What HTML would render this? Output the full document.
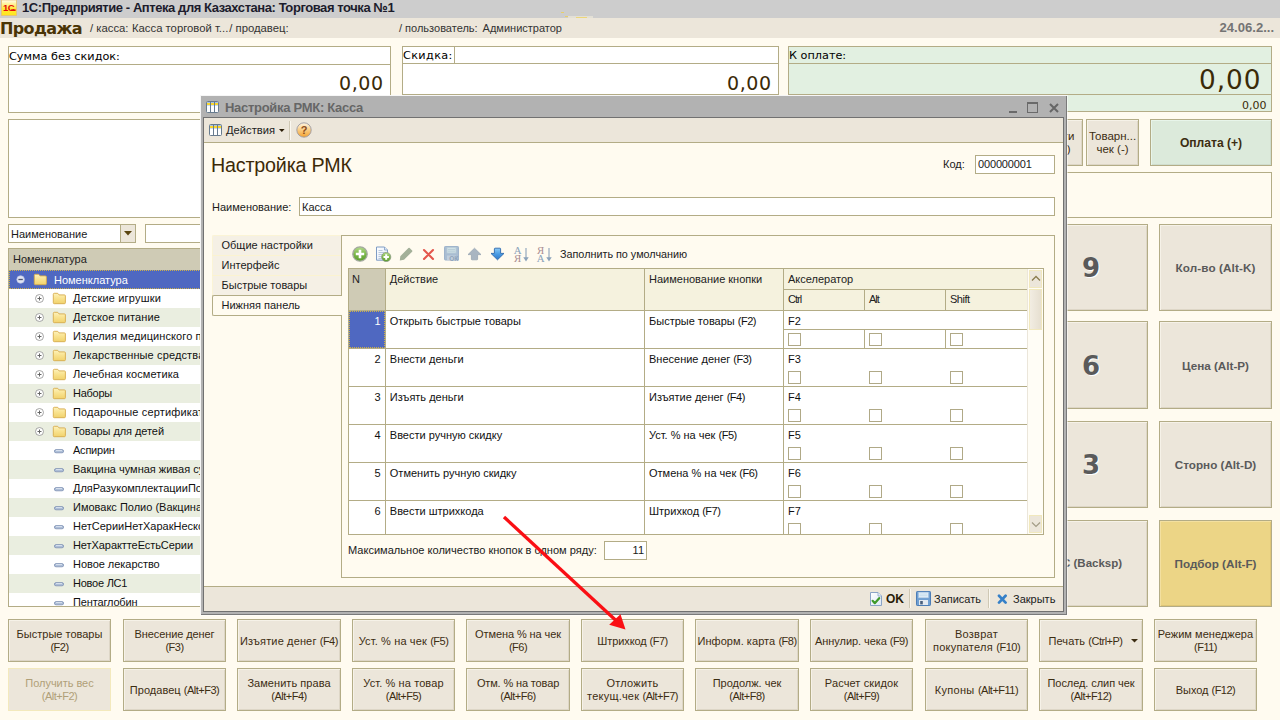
<!DOCTYPE html>
<html lang="ru"><head><meta charset="utf-8"><title>1С:Предприятие</title>
<style>
*{box-sizing:border-box}
html,body{margin:0;padding:0}
body{width:1280px;height:720px;position:relative;overflow:hidden;background:#fffbf0;font-family:"Liberation Sans",sans-serif;font-size:11px;color:#1a1a1a;line-height:13px}
.a{position:absolute;white-space:nowrap}
.v{font-family:"DejaVu Sans","Liberation Sans",sans-serif}
.box{position:absolute;border:1px solid #b3ac86;background:#fff}
.btn{position:absolute;border:1px solid #b3ac86;background:#ece6da;box-shadow:inset 1px 1px 0 #f6f2e8,inset -1px -1px 0 #ddd6c6;display:flex;align-items:center;justify-content:center;text-align:center;color:#3c2d12;font-size:11px;line-height:13px}
.nb{font-weight:bold;color:#5a5a5a}
.l{letter-spacing:-.5px}
.btn .l{letter-spacing:-.5px}
.hl{position:absolute;background:#b3ac86}
</style></head><body>

<!-- app title bar -->
<div class="a" style="left:0;top:0;width:1280px;height:18px;background:#cdcdcd"></div>
<svg class="a" style="left:1px;top:0" width="16" height="16" viewBox="0 0 16 16"><defs><linearGradient id="ig" x1="0" y1="0" x2="0" y2="1"><stop offset="0" stop-color="#fffdf0"/><stop offset=".55" stop-color="#ffe83a"/><stop offset="1" stop-color="#ffe61c"/></linearGradient></defs><rect x=".5" y="0" width="15" height="15.5" fill="url(#ig)" stroke="#e8c070" stroke-width=".8"/><text x="2" y="11" font-family="Liberation Sans,sans-serif" font-weight="bold" font-size="9.5" letter-spacing="-.5" fill="#e60a0a">1С</text><path d="M10 10.2h4.6" stroke="#e60a0a" stroke-width="1.6"/></svg>
<div class="a" id="apptitle" style="left:22px;top:0px;font-weight:bold;font-size:13px;letter-spacing:-.43px;line-height:15px;color:#1c1c2c">1С:Предприятие - Аптека для Казахстана: Торговая точка №1</div>

<div class="a" style="left:568px;top:16px;width:25px;height:2px;background:#e3e0d6"></div><div class="a" style="left:576px;top:17px;width:11px;height:1px;background:#ecd67a"></div><div class="a" style="left:561px;top:12px;width:3px;height:1px;background:#e8cf6a"></div><div class="a" style="left:565px;top:16px;width:3px;height:1px;background:#e8cf6a"></div>
<!-- header bar -->
<div class="a" style="left:0;top:18px;width:1280px;height:20px;background:#ece6da"></div>
<div class="a v" id="prodazha" style="left:0px;top:19px;font-weight:bold;font-size:16px;letter-spacing:-.62px;line-height:20px;color:#4a3405">Продажа</div>
<div class="a" id="kassa" style="left:90px;top:22px;font-size:11.3px;color:#333">/ касса:<span style="margin-left:3.5px">Касса торговой т...</span><span style="margin-left:1px">/ продавец:</span></div>
<div class="a" id="user" style="left:399px;top:22px;font-size:11px;color:#333">/ пользователь:<span style="margin-left:5px">Администратор</span></div>
<div class="a" id="date" style="left:1219.5px;top:20px;font-size:13.1px;line-height:15px;font-weight:bold;color:#747474">24.06.2...</div>

<!-- top boxes -->
<div class="box" style="left:8px;top:46px;width:383px;height:67px"></div>
<div class="hl" style="left:8px;top:64px;width:383px;height:1px"></div>
<div class="a v" id="summa" style="left:9px;top:50px;font-size:11.25px;color:#000">Сумма без скидок:</div>
<div class="a v" id="z1" style="left:339px;top:71px;font-size:19px;letter-spacing:.6px;line-height:24px;color:#3a2a08">0,00</div>

<div class="box" style="left:402px;top:46px;width:377px;height:49px"></div>
<div class="hl" style="left:402px;top:63px;width:377px;height:1px"></div>
<div class="hl" style="left:454px;top:46px;width:1px;height:18px"></div>
<div class="a v" id="skidka" style="left:403px;top:49px;font-size:11.25px;letter-spacing:.35px;color:#000">Скидка:</div>
<div class="a v" id="z2" style="left:727px;top:71px;font-size:19px;letter-spacing:.6px;line-height:24px;color:#3a2a08">0,00</div>

<div class="box" style="left:788px;top:46px;width:484px;height:66px;background:#e2f0e1"></div>
<div class="hl" style="left:788px;top:63px;width:484px;height:1px"></div>
<div class="hl" style="left:788px;top:94px;width:484px;height:1px"></div>
<div class="a v" id="koplate" style="left:789px;top:49px;font-size:11.25px;color:#000">К оплате:</div>
<div class="a v" id="z3" style="left:1199px;top:63px;font-size:26.3px;letter-spacing:1px;line-height:34px;color:#3a2a08">0,00</div>
<div class="a v" id="z4" style="left:1242px;top:99px;font-size:11px;color:#3a2a08">0,00</div>

<!-- second row -->
<div class="box" style="left:8px;top:119px;width:1000px;height:99px"></div>
<div class="btn" style="left:1030px;top:119px;width:53px;height:47px;font-size:11.5px"><div><span style="position:relative;left:-1px">Внести</span><br><span style="position:relative;left:2.5px">(Ins)</span></div></div>
<div class="btn" style="left:1086px;top:119px;width:53px;height:47px;font-size:11.5px"><div>Товарн...<br>чек (-)</div></div>
<div class="btn" style="left:1150px;top:119px;width:122px;height:47px;background:#dceadb;box-shadow:inset 1px 1px 0 #e8f5ea,inset -1px -1px 0 #cfddce;font-weight:bold;font-size:12.1px;padding-top:2px">Оплата (+)</div>
<div class="box" style="left:1020px;top:172px;width:252px;height:46px;background:#fffbf0"></div>

<!-- combobox -->
<div class="box" style="left:8px;top:224px;width:128px;height:19px"></div>
<div class="a" style="left:120px;top:225px;width:15px;height:17px;background:#ece6da;border-left:1px solid #b3ac86"></div>
<svg class="a" style="left:124px;top:231px" width="8" height="5"><path d="M0 0h8l-4 4.5z" fill="#5a4510"/></svg>
<div class="a" id="naim1" style="left:11px;top:228px">Наименование</div>
<div class="box" style="left:145px;top:224px;width:200px;height:19px"></div>

<!-- tree -->
<div class="box" id="tree" style="left:8px;top:248px;width:400px;height:359px;overflow:hidden">
<svg class="a" width="0" height="0"><defs><linearGradient id="fg" x1="0" y1="0" x2="0" y2="1"><stop offset="0" stop-color="#fdf2bc"/><stop offset=".45" stop-color="#f9e391"/><stop offset="1" stop-color="#f1d26c"/></linearGradient></defs></svg>
<div class="a" style="left:0;top:0;width:400px;height:21px;background:#cfcbb5"></div>
<div class="a" style="left:4px;top:4px;color:#222">Номенклатура</div>
<div class="a" style="left:0;top:21px;width:400px;height:19px;background:#4f68c1;outline:1px dotted #cdb04a;outline-offset:-1px"></div>
<svg class="a" style="left:7px;top:25.69999999999999px" width="9" height="9" viewBox="0 0 9 9"><circle cx="4.6" cy="4.5" r="3.8" fill="#e0e4f3" stroke="#b9c1e2" stroke-width=".7"/><path d="M2.4 4.5h4.4" stroke="#4a5270" stroke-width="1.3"/></svg>
<svg class="a" style="left:23.700000000000003px;top:23.69999999999999px" width="15" height="13" viewBox="0 0 15 13"><path d="M1.3 2.3a1 1 0 0 1 1-1h3.4l1.3 1.6h5.4a1 1 0 0 1 1 1v6.8a1 1 0 0 1-1 1h-10.1a1 1 0 0 1-1-1z" fill="url(#fg)" stroke="#d7ab4c" stroke-width=".9"/></svg>
<div class="a" style="left:45px;top:25px;color:#fff">Номенклатура</div>
<svg class="a" style="left:26px;top:45px" width="9" height="9" viewBox="0 0 9 9"><circle cx="4.5" cy="4.5" r="4" fill="#fff" stroke="#9a9a9a" stroke-width=".9"/><path d="M2.5 4.5h4M4.5 2.5v4" stroke="#666" stroke-width="1"/></svg>
<svg class="a" style="left:42.7px;top:42.69999999999999px" width="15" height="13" viewBox="0 0 15 13"><path d="M1.3 2.3a1 1 0 0 1 1-1h3.4l1.3 1.6h5.4a1 1 0 0 1 1 1v6.8a1 1 0 0 1-1 1h-10.1a1 1 0 0 1-1-1z" fill="url(#fg)" stroke="#d7ab4c" stroke-width=".9"/></svg>
<div class="a" style="left:64px;top:43px;color:#111;letter-spacing:0.19px">Детские игрушки</div>
<div class="a" style="left:0;top:59px;width:400px;height:19px;background:#eaeee0"></div>
<svg class="a" style="left:26px;top:64px" width="9" height="9" viewBox="0 0 9 9"><circle cx="4.5" cy="4.5" r="4" fill="#fff" stroke="#9a9a9a" stroke-width=".9"/><path d="M2.5 4.5h4M4.5 2.5v4" stroke="#666" stroke-width="1"/></svg>
<svg class="a" style="left:42.7px;top:61.69999999999999px" width="15" height="13" viewBox="0 0 15 13"><path d="M1.3 2.3a1 1 0 0 1 1-1h3.4l1.3 1.6h5.4a1 1 0 0 1 1 1v6.8a1 1 0 0 1-1 1h-10.1a1 1 0 0 1-1-1z" fill="url(#fg)" stroke="#d7ab4c" stroke-width=".9"/></svg>
<div class="a" style="left:64px;top:62px;color:#111;letter-spacing:0.11px">Детское питание</div>
<svg class="a" style="left:26px;top:83px" width="9" height="9" viewBox="0 0 9 9"><circle cx="4.5" cy="4.5" r="4" fill="#fff" stroke="#9a9a9a" stroke-width=".9"/><path d="M2.5 4.5h4M4.5 2.5v4" stroke="#666" stroke-width="1"/></svg>
<svg class="a" style="left:42.7px;top:80.69999999999999px" width="15" height="13" viewBox="0 0 15 13"><path d="M1.3 2.3a1 1 0 0 1 1-1h3.4l1.3 1.6h5.4a1 1 0 0 1 1 1v6.8a1 1 0 0 1-1 1h-10.1a1 1 0 0 1-1-1z" fill="url(#fg)" stroke="#d7ab4c" stroke-width=".9"/></svg>
<div class="a" style="left:64px;top:81px;color:#111;letter-spacing:0.10px">Изделия медицинского применения</div>
<div class="a" style="left:0;top:97px;width:400px;height:19px;background:#eaeee0"></div>
<svg class="a" style="left:26px;top:102px" width="9" height="9" viewBox="0 0 9 9"><circle cx="4.5" cy="4.5" r="4" fill="#fff" stroke="#9a9a9a" stroke-width=".9"/><path d="M2.5 4.5h4M4.5 2.5v4" stroke="#666" stroke-width="1"/></svg>
<svg class="a" style="left:42.7px;top:99.69999999999999px" width="15" height="13" viewBox="0 0 15 13"><path d="M1.3 2.3a1 1 0 0 1 1-1h3.4l1.3 1.6h5.4a1 1 0 0 1 1 1v6.8a1 1 0 0 1-1 1h-10.1a1 1 0 0 1-1-1z" fill="url(#fg)" stroke="#d7ab4c" stroke-width=".9"/></svg>
<div class="a" style="left:64px;top:100px;color:#111;letter-spacing:0.13px">Лекарственные средства</div>
<svg class="a" style="left:26px;top:121px" width="9" height="9" viewBox="0 0 9 9"><circle cx="4.5" cy="4.5" r="4" fill="#fff" stroke="#9a9a9a" stroke-width=".9"/><path d="M2.5 4.5h4M4.5 2.5v4" stroke="#666" stroke-width="1"/></svg>
<svg class="a" style="left:42.7px;top:118.69999999999999px" width="15" height="13" viewBox="0 0 15 13"><path d="M1.3 2.3a1 1 0 0 1 1-1h3.4l1.3 1.6h5.4a1 1 0 0 1 1 1v6.8a1 1 0 0 1-1 1h-10.1a1 1 0 0 1-1-1z" fill="url(#fg)" stroke="#d7ab4c" stroke-width=".9"/></svg>
<div class="a" style="left:64px;top:119px;color:#111;letter-spacing:0.09px">Лечебная косметика</div>
<div class="a" style="left:0;top:135px;width:400px;height:19px;background:#eaeee0"></div>
<svg class="a" style="left:26px;top:140px" width="9" height="9" viewBox="0 0 9 9"><circle cx="4.5" cy="4.5" r="4" fill="#fff" stroke="#9a9a9a" stroke-width=".9"/><path d="M2.5 4.5h4M4.5 2.5v4" stroke="#666" stroke-width="1"/></svg>
<svg class="a" style="left:42.7px;top:137.7px" width="15" height="13" viewBox="0 0 15 13"><path d="M1.3 2.3a1 1 0 0 1 1-1h3.4l1.3 1.6h5.4a1 1 0 0 1 1 1v6.8a1 1 0 0 1-1 1h-10.1a1 1 0 0 1-1-1z" fill="url(#fg)" stroke="#d7ab4c" stroke-width=".9"/></svg>
<div class="a" style="left:64px;top:138px;color:#111;letter-spacing:-0.25px">Наборы</div>
<svg class="a" style="left:26px;top:159px" width="9" height="9" viewBox="0 0 9 9"><circle cx="4.5" cy="4.5" r="4" fill="#fff" stroke="#9a9a9a" stroke-width=".9"/><path d="M2.5 4.5h4M4.5 2.5v4" stroke="#666" stroke-width="1"/></svg>
<svg class="a" style="left:42.7px;top:156.7px" width="15" height="13" viewBox="0 0 15 13"><path d="M1.3 2.3a1 1 0 0 1 1-1h3.4l1.3 1.6h5.4a1 1 0 0 1 1 1v6.8a1 1 0 0 1-1 1h-10.1a1 1 0 0 1-1-1z" fill="url(#fg)" stroke="#d7ab4c" stroke-width=".9"/></svg>
<div class="a" style="left:64px;top:157px;color:#111;letter-spacing:0.15px">Подарочные сертификаты</div>
<div class="a" style="left:0;top:173px;width:400px;height:19px;background:#eaeee0"></div>
<svg class="a" style="left:26px;top:178px" width="9" height="9" viewBox="0 0 9 9"><circle cx="4.5" cy="4.5" r="4" fill="#fff" stroke="#9a9a9a" stroke-width=".9"/><path d="M2.5 4.5h4M4.5 2.5v4" stroke="#666" stroke-width="1"/></svg>
<svg class="a" style="left:42.7px;top:175.7px" width="15" height="13" viewBox="0 0 15 13"><path d="M1.3 2.3a1 1 0 0 1 1-1h3.4l1.3 1.6h5.4a1 1 0 0 1 1 1v6.8a1 1 0 0 1-1 1h-10.1a1 1 0 0 1-1-1z" fill="url(#fg)" stroke="#d7ab4c" stroke-width=".9"/></svg>
<div class="a" style="left:64px;top:176px;color:#111;letter-spacing:-0.07px">Товары для детей</div>
<svg class="a" style="left:45px;top:200px" width="10" height="5" viewBox="0 0 10 5"><rect x=".4" y=".6" width="9.2" height="3.2" rx="1.6" fill="#aebfd8" stroke="#7d91b2" stroke-width=".8"/><path d="M2 1.5h6" stroke="#dfe7f3" stroke-width=".8"/></svg>
<div class="a" style="left:64px;top:195px;color:#111;letter-spacing:-0.23px">Аспирин</div>
<div class="a" style="left:0;top:211px;width:400px;height:19px;background:#eaeee0"></div>
<svg class="a" style="left:45px;top:219px" width="10" height="5" viewBox="0 0 10 5"><rect x=".4" y=".6" width="9.2" height="3.2" rx="1.6" fill="#aebfd8" stroke="#7d91b2" stroke-width=".8"/><path d="M2 1.5h6" stroke="#dfe7f3" stroke-width=".8"/></svg>
<div class="a" style="left:64px;top:214px;color:#111;letter-spacing:0.00px">Вакцина чумная живая сухая</div>
<svg class="a" style="left:45px;top:238px" width="10" height="5" viewBox="0 0 10 5"><rect x=".4" y=".6" width="9.2" height="3.2" rx="1.6" fill="#aebfd8" stroke="#7d91b2" stroke-width=".8"/><path d="M2 1.5h6" stroke="#dfe7f3" stroke-width=".8"/></svg>
<div class="a" style="left:64px;top:233px;color:#111;letter-spacing:0.00px">ДляРазукомплектацииПоСериям</div>
<div class="a" style="left:0;top:249px;width:400px;height:19px;background:#eaeee0"></div>
<svg class="a" style="left:45px;top:257px" width="10" height="5" viewBox="0 0 10 5"><rect x=".4" y=".6" width="9.2" height="3.2" rx="1.6" fill="#aebfd8" stroke="#7d91b2" stroke-width=".8"/><path d="M2 1.5h6" stroke="#dfe7f3" stroke-width=".8"/></svg>
<div class="a" style="left:64px;top:252px;color:#111;letter-spacing:0.00px">Имовакс Полио (Вакцина)</div>
<svg class="a" style="left:45px;top:276px" width="10" height="5" viewBox="0 0 10 5"><rect x=".4" y=".6" width="9.2" height="3.2" rx="1.6" fill="#aebfd8" stroke="#7d91b2" stroke-width=".8"/><path d="M2 1.5h6" stroke="#dfe7f3" stroke-width=".8"/></svg>
<div class="a" style="left:64px;top:271px;color:#111;letter-spacing:0.00px">НетСерииНетХаракНесколько</div>
<div class="a" style="left:0;top:287px;width:400px;height:19px;background:#eaeee0"></div>
<svg class="a" style="left:45px;top:295px" width="10" height="5" viewBox="0 0 10 5"><rect x=".4" y=".6" width="9.2" height="3.2" rx="1.6" fill="#aebfd8" stroke="#7d91b2" stroke-width=".8"/><path d="M2 1.5h6" stroke="#dfe7f3" stroke-width=".8"/></svg>
<div class="a" style="left:64px;top:290px;color:#111;letter-spacing:-0.07px">НетХаракттеЕстьСерии</div>
<svg class="a" style="left:45px;top:314px" width="10" height="5" viewBox="0 0 10 5"><rect x=".4" y=".6" width="9.2" height="3.2" rx="1.6" fill="#aebfd8" stroke="#7d91b2" stroke-width=".8"/><path d="M2 1.5h6" stroke="#dfe7f3" stroke-width=".8"/></svg>
<div class="a" style="left:64px;top:309px;color:#111;letter-spacing:-0.04px">Новое лекарство</div>
<div class="a" style="left:0;top:325px;width:400px;height:19px;background:#eaeee0"></div>
<svg class="a" style="left:45px;top:333px" width="10" height="5" viewBox="0 0 10 5"><rect x=".4" y=".6" width="9.2" height="3.2" rx="1.6" fill="#aebfd8" stroke="#7d91b2" stroke-width=".8"/><path d="M2 1.5h6" stroke="#dfe7f3" stroke-width=".8"/></svg>
<div class="a" style="left:64px;top:328px;color:#111;letter-spacing:-0.24px">Новое ЛС1</div>
<svg class="a" style="left:45px;top:352px" width="10" height="5" viewBox="0 0 10 5"><rect x=".4" y=".6" width="9.2" height="3.2" rx="1.6" fill="#aebfd8" stroke="#7d91b2" stroke-width=".8"/><path d="M2 1.5h6" stroke="#dfe7f3" stroke-width=".8"/></svg>
<div class="a" style="left:64px;top:347px;color:#111;letter-spacing:-0.15px">Пентаглобин</div>
</div>

<!-- right keypad -->
<div class="btn nb" style="left:1040px;top:224px;width:108px;height:87px;font-family:'DejaVu Sans',sans-serif;font-size:26px;text-shadow:1px 1px 0 #fff;justify-content:flex-start;padding-left:41px;padding-top:2px" >9</div>
<div class="btn nb" style="left:1159px;top:224px;width:113px;height:87px;font-size:11.7px;letter-spacing:.12px">Кол-во (Alt-K)</div>
<div class="btn nb" style="left:1040px;top:321px;width:108px;height:88px;font-family:'DejaVu Sans',sans-serif;font-size:26px;text-shadow:1px 1px 0 #fff;justify-content:flex-start;padding-left:41px;padding-top:2px">6</div>
<div class="btn nb" style="left:1159px;top:321px;width:113px;height:88px;font-size:11.7px">Цена (Alt-P)</div>
<div class="btn nb" style="left:1040px;top:421px;width:108px;height:87px;font-family:'DejaVu Sans',sans-serif;font-size:26px;text-shadow:1px 1px 0 #fff;justify-content:flex-start;padding-left:41px;padding-top:2px">3</div>
<div class="btn nb" style="left:1159px;top:421px;width:113px;height:87px;font-size:11.7px">Сторно (Alt-D)</div>
<div class="btn nb" style="left:1040px;top:520px;width:108px;height:87px;font-size:11.5px;justify-content:flex-start;padding-left:21px">С (Backsp)</div>
<div class="btn nb" style="left:1159px;top:520px;width:113px;height:87px;font-size:11.7px;background:#ecd586;box-shadow:inset 1px 1px 0 #f3e0a0,inset -1px -1px 0 #dfc676">Подбор (Alt-F)</div>

<!-- bottom buttons -->
<div id="bb">
<div class="btn" style="left:8px;top:619px;width:103px;height:43px"><div style="letter-spacing:0.00px">Быстрые товары<br><span class="l">(F2)</span></div></div>
<div class="btn" style="left:123px;top:619px;width:103px;height:43px"><div style="letter-spacing:-0.09px">Внесение денег<br><span class="l">(F3)</span></div></div>
<div class="btn" style="left:237px;top:619px;width:104px;height:43px;padding-top:2px"><div style="letter-spacing:0.14px">Изъятие денег <span class="l">(F4)</span></div></div>
<div class="btn" style="left:352px;top:619px;width:103px;height:43px;padding-top:2px"><div style="letter-spacing:0.14px">Уст. % на чек <span class="l">(F5)</span></div></div>
<div class="btn" style="left:466px;top:619px;width:104px;height:43px"><div style="letter-spacing:-0.10px">Отмена % на чек<br><span class="l">(F6)</span></div></div>
<div class="btn" style="left:581px;top:619px;width:103px;height:43px;padding-top:2px"><div style="letter-spacing:-0.09px">Штрихкод <span class="l">(F7)</span></div></div>
<div class="btn" style="left:695px;top:619px;width:104px;height:43px;padding-top:2px"><div style="letter-spacing:0.06px">Информ. карта <span class="l">(F8)</span></div></div>
<div class="btn" style="left:810px;top:619px;width:103px;height:43px;padding-top:2px"><div style="letter-spacing:-0.07px">Аннулир. чека <span class="l">(F9)</span></div></div>
<div class="btn" style="left:925px;top:619px;width:103px;height:43px"><div style="letter-spacing:0.26px">Возврат<br>покупателя <span class="l">(F10)</span></div></div>
<div class="btn" style="left:1039px;top:619px;width:104px;height:43px;padding-top:2px"><div style="letter-spacing:0.11px"><span style="margin-right:11px">Печать <span class="l">(Ctrl+P)</span></span><svg class="a" style="right:4px;top:19px" width="7" height="4"><path d="M0 0h7l-3.5 3.5z" fill="#3c2d12"/></svg></div></div>
<div class="btn" style="left:1154px;top:619px;width:103px;height:43px"><div style="letter-spacing:0.04px">Режим менеджера<br><span class="l">(F11)</span></div></div>
<div class="btn" style="left:8px;top:668px;width:103px;height:43px;color:#b0a078;border-color:#f3e9bd;box-shadow:none"><div style="letter-spacing:-0.04px">Получить вес<br><span class="l">(Alt+F2)</span></div></div>
<div class="btn" style="left:123px;top:668px;width:103px;height:43px;padding-top:2px"><div style="letter-spacing:0.03px">Продавец <span class="l">(Alt+F3)</span></div></div>
<div class="btn" style="left:237px;top:668px;width:104px;height:43px"><div style="letter-spacing:0.05px">Заменить права<br><span class="l">(Alt+F4)</span></div></div>
<div class="btn" style="left:352px;top:668px;width:103px;height:43px"><div style="letter-spacing:0.10px">Уст. % на товар<br><span class="l">(Alt+F5)</span></div></div>
<div class="btn" style="left:466px;top:668px;width:104px;height:43px"><div style="letter-spacing:-0.14px">Отм. % на товар<br><span class="l">(Alt+F6)</span></div></div>
<div class="btn" style="left:581px;top:668px;width:103px;height:43px"><div style="letter-spacing:0.21px">Отложить<br>текущ.чек <span class="l">(Alt+F7)</span></div></div>
<div class="btn" style="left:695px;top:668px;width:104px;height:43px"><div style="letter-spacing:0.00px">Продолж. чек<br><span class="l">(Alt+F8)</span></div></div>
<div class="btn" style="left:810px;top:668px;width:103px;height:43px"><div style="letter-spacing:0.11px">Расчет скидок<br><span class="l">(Alt+F9)</span></div></div>
<div class="btn" style="left:925px;top:668px;width:103px;height:43px;padding-top:2px"><div style="letter-spacing:0.29px">Купоны <span class="l">(Alt+F11)</span></div></div>
<div class="btn" style="left:1039px;top:668px;width:104px;height:43px"><div style="letter-spacing:-0.07px">Послед. слип чек<br><span class="l">(Alt+F12)</span></div></div>
<div class="btn" style="left:1154px;top:668px;width:103px;height:43px;padding-top:2px"><div style="letter-spacing:-0.04px">Выход <span class="l">(F12)</span></div></div>
</div>

<!-- dialog -->
<div class="a" id="dlg" style="left:201px;top:96px;width:866px;height:519px;background:#b2b2b2;box-shadow:0 0 0 1px rgba(255,255,255,.5),-1px -1px 0 #ececec;border-right:1px solid #7a7a7a;border-bottom:1px solid #7a7a7a"></div>
<div class="a" style="left:203px;top:117px;width:861px;height:495px;background:#717171"></div>
<div class="a" style="left:204px;top:118px;width:859px;height:493px;background:#fffbf0"></div>
<!-- title -->
<svg class="a" style="left:206px;top:101px" width="13" height="12" viewBox="0 0 13 12"><rect x=".5" y=".5" width="12" height="11" rx="1" fill="#fdfeff" stroke="#677b8e"/><rect x="1" y="1" width="11" height="1" fill="#a9c4e0"/><rect x="1" y="2" width="11" height="2" fill="#fbd62a"/><rect x="1" y="4" width="11" height="1" fill="#c9dcf0"/><path d="M4.5 1v10M8.5 1v10" stroke="#677b8e"/></svg>
<div class="a" id="dtitle" style="left:225px;top:100px;font-weight:bold;font-size:13px;letter-spacing:-.29px;line-height:15px;color:#666">Настройка РМК: Касса</div>
<div class="a" style="left:1009px;top:111px;width:8px;height:2px;background:#6a6a6a"></div>
<div class="a" style="left:1027px;top:102px;width:11px;height:11px;border:1px solid #6a6a6a;border-top-width:2px"></div>
<svg class="a" style="left:1049px;top:103px" width="10" height="10" viewBox="0 0 10 10"><path d="M1 1l8 8M9 1l-8 8" stroke="#666" stroke-width="2"/></svg>
<!-- toolbar -->
<div class="a" style="left:204px;top:118px;width:859px;height:25px;background:#ece6da;border-bottom:1px solid #b3ac86"></div>
<svg class="a" style="left:209px;top:124px" width="13" height="12" viewBox="0 0 13 12"><rect x=".5" y=".5" width="12" height="11" rx="1" fill="#fdfeff" stroke="#677b8e"/><rect x="1" y="1" width="11" height="1" fill="#a9c4e0"/><rect x="1" y="2" width="11" height="2" fill="#fbd62a"/><rect x="1" y="4" width="11" height="1" fill="#c9dcf0"/><path d="M4.5 1v10M8.5 1v10" stroke="#677b8e"/></svg>
<div class="a" id="deist" style="left:226px;top:124px;font-size:11.2px;color:#222">Действия</div>
<svg class="a" style="left:278.6px;top:129px" width="6" height="4"><path d="M0 0h5.6l-2.8 3z" fill="#2a1c06"/></svg>
<div class="a" style="left:289px;top:121px;width:1px;height:19px;background:#cfc8b4"></div>
<div class="a" style="left:290px;top:121px;width:1px;height:19px;background:#fbf8f0"></div>
<svg class="a" style="left:296px;top:122px" width="16" height="16" viewBox="0 0 16 16"><defs><linearGradient id="hg" x1="0" y1="0" x2="0" y2="1"><stop offset="0" stop-color="#fff6e4"/><stop offset=".45" stop-color="#fbd08a"/><stop offset="1" stop-color="#f3a230"/></linearGradient></defs><circle cx="8" cy="8" r="7.2" fill="url(#hg)" stroke="#9c9aa2" stroke-width=".9"/><text x="8" y="12" text-anchor="middle" font-family="Liberation Sans,sans-serif" font-weight="bold" font-size="11" fill="#8a4c1c">?</text></svg>
<!-- heading -->
<div class="a" id="bighead" style="left:211px;top:153px;font-size:19.7px;letter-spacing:-.18px;line-height:24px;color:#3c2a08">Настройка РМК</div>
<div class="a" id="kod" style="left:943px;top:158px">Код:</div>
<div class="box" style="left:975px;top:155px;width:80px;height:19px"></div>
<div class="a" id="kodv" style="left:978px;top:158px;letter-spacing:-.15px">000000001</div>
<div class="a" id="naim2" style="left:212px;top:201px">Наименование:</div>
<div class="box" style="left:299px;top:197px;width:756px;height:19px"></div>
<div class="a" style="left:302px;top:201px">Касса</div>
<!-- tabs -->
<div class="a" style="left:212px;top:235px;width:130px;height:61px;background:#f5f0e5;border-left:1px solid #fbf4d6;border-top:1px solid #fbf4d6;border-radius:2px 0 0 0"></div>
<div class="a" style="left:212px;top:255px;width:130px;height:1px;background:#fbf3d0"></div>
<div class="a" style="left:212px;top:275px;width:130px;height:1px;background:#fbf3d0"></div>
<div class="a" style="left:341px;top:235px;width:714px;height:343px;border:1px solid #b3ac86;background:#fffbf0"></div>
<div class="a" style="left:212px;top:295px;width:130px;height:21px;border:1px solid #b3ac86;border-right:none;background:#fffbf0;border-radius:2px 0 0 2px"></div>
<div class="a" id="tab1" style="left:221.5px;top:239px">Общие настройки</div>
<div class="a" style="left:221.5px;top:259px">Интерфейс</div>
<div class="a" style="left:221.5px;top:279px">Быстрые товары</div>
<div class="a" style="left:221.5px;top:299px">Нижняя панель</div>
<!--ICONS-->
<svg class="a" style="left:0;top:0" width="0" height="0"><defs>
<linearGradient id="gg" x1="0" y1="0" x2="0" y2="1"><stop offset="0" stop-color="#b4dc8c"/><stop offset=".5" stop-color="#7cb848"/><stop offset="1" stop-color="#5c9c30"/></linearGradient>
<linearGradient id="bg1" x1="0" y1="0" x2="0" y2="1"><stop offset="0" stop-color="#8ccbf8"/><stop offset=".5" stop-color="#4a9ce4"/><stop offset="1" stop-color="#2f78c8"/></linearGradient>
<linearGradient id="dg" x1="0" y1="0" x2="1" y2="1"><stop offset="0" stop-color="#ffffff"/><stop offset="1" stop-color="#dde8f6"/></linearGradient>
</defs></svg>
<svg class="a" style="left:352px;top:246px" width="16" height="16" viewBox="0 0 16 16"><circle cx="8" cy="8" r="7.2" fill="url(#gg)" stroke="#a4a8a0" stroke-width="1.3"/><path d="M8 3.8v8.4M3.8 8h8.4" stroke="#fff" stroke-width="2.6"/></svg>
<svg class="a" style="left:376px;top:246px" width="16" height="16" viewBox="0 0 16 16"><path d="M.5 1h8l3 3v10.2h-11z" fill="url(#dg)" stroke="#7f9cc4" stroke-width="1"/><path d="M8.5 1v3h3" fill="#dfe9f7" stroke="#7f9cc4" stroke-width=".8"/><path d="M2.5 4.5h4M2.5 6.5h6M2.5 8.5h4M2.5 10.5h3M2.5 12.5h3" stroke="#b3c3da" stroke-width=".9"/><circle cx="10.2" cy="11" r="4.6" fill="url(#gg)" stroke="#8c9a84" stroke-width=".8"/><path d="M10.2 8.3v5.4M7.5 11h5.4" stroke="#fff" stroke-width="2"/></svg>
<svg class="a" style="left:398px;top:246px" width="16" height="16" viewBox="0 0 16 16"><path d="M1.8 14.4l.5-4.2L10.4 2a.9.9 0 0 1 1.3 0l2.4 2.4a.9.9 0 0 1 0 1.3L6 13.8z" fill="#a3b099"/></svg>
<svg class="a" style="left:422px;top:248px" width="13" height="13" viewBox="0 0 13 13"><path d="M2 2l9 9M11 2l-9 9" stroke="#e4564c" stroke-width="2.1" stroke-linecap="round"/></svg>
<svg class="a" style="left:444px;top:246px" width="16" height="16" viewBox="0 0 16 16"><path d="M.5 1.2a.7.7 0 0 1 .7-.7h12.6a.7.7 0 0 1 .7.7v12.8H1.2a.7.7 0 0 1-.7-.7z" fill="#a9bdd2" stroke="#9fb4cb"/><rect x="3" y="1.5" width="9" height="5.5" fill="#cfe0e6" stroke="#b8ccd8" stroke-width=".8"/><path d="M4 3.5h7M4 5.2h7" stroke="#b4c9d4" stroke-width=".8"/><rect x="3" y="9.5" width="9" height="4.5" fill="#c1cfdd"/><text x="5.2" y="14.6" font-family="Liberation Sans,sans-serif" font-weight="bold" font-size="6.5" fill="#8fa3ba">ОК</text></svg>
<svg class="a" style="left:467px;top:247px" width="15" height="14" viewBox="0 0 15 14"><path d="M7.5 1.2L14 7.6H10.6V12.2a.6.6 0 0 1-.6.6H5a.6.6 0 0 1-.6-.6V7.6H1z" fill="#a9b5c1" stroke="#98a5b2" stroke-width=".8" stroke-linejoin="round"/></svg>
<svg class="a" style="left:490px;top:247px" width="15" height="14" viewBox="0 0 15 14"><path d="M7.5 12.8L14 6.4H10.6V1.8a.6.6 0 0 0-.6-.6H5a.6.6 0 0 0-.6.6V6.4H1z" fill="url(#bg1)" stroke="#2f69ad" stroke-width=".9" stroke-linejoin="round"/></svg>
<svg class="a" style="left:513px;top:245px" width="17" height="18" viewBox="0 0 17 18"><text x=".8" y="8.6" font-family="Liberation Serif,serif" font-size="10.8" fill="#8aa2ba">А</text><text x="1" y="16.8" font-family="Liberation Serif,serif" font-size="10.8" fill="#a98e92">Я</text><path d="M13 3v11" stroke="#8aa2ba" stroke-width="1.1"/><path d="M10.3 12.2h5.4l-2.7 4.2z" fill="#8aa2ba"/></svg>
<svg class="a" style="left:536px;top:245px" width="17" height="18" viewBox="0 0 17 18"><text x="1" y="8.8" font-family="Liberation Serif,serif" font-size="10.8" fill="#a98e92">Я</text><text x=".8" y="16.8" font-family="Liberation Serif,serif" font-size="10.8" fill="#8aa2ba">А</text><path d="M13 3v11" stroke="#8aa2ba" stroke-width="1.1"/><path d="M10.3 12.2h5.4l-2.7 4.2z" fill="#8aa2ba"/></svg>
<!--/ICONS-->
<div class="a" id="zapoln" style="left:560px;top:248px;font-size:10.8px">Заполнить по умолчанию</div>
<!--TABLE-->
<div class="a" style="left:348px;top:268px;width:696px;height:267px;border:1px solid #b3ac86;background:#fff"></div>
<div class="a" style="left:349px;top:269px;width:679px;height:41px;background:#f5f2de"></div>
<div class="a" style="left:349px;top:269px;width:36px;height:41px;background:#cfcbb5"></div>
<div class="hl" style="left:349px;top:310px;width:679px;height:1px"></div>
<div class="hl" style="left:784px;top:289px;width:244px;height:1px"></div>
<div class="hl" style="left:385px;top:269px;width:1px;height:265px"></div>
<div class="hl" style="left:644px;top:269px;width:1px;height:265px"></div>
<div class="hl" style="left:783px;top:269px;width:1px;height:265px"></div>
<div class="hl" style="left:864px;top:290px;width:1px;height:20px"></div>
<div class="hl" style="left:864px;top:330px;width:1px;height:18px"></div>
<div class="hl" style="left:945px;top:290px;width:1px;height:20px"></div>
<div class="hl" style="left:945px;top:330px;width:1px;height:18px"></div>
<div class="hl" style="left:784px;top:329px;width:243px;height:1px"></div>
<div class="a" style="left:352px;top:273px;color:#222">N</div>
<div class="a" style="left:389.8px;top:273px;color:#222">Действие</div>
<div class="a" style="left:649px;top:273px;color:#222">Наименование кнопки</div>
<div class="a" style="left:788px;top:273px;color:#222">Акселератор</div>
<div class="a" style="left:788px;top:293px;color:#222;letter-spacing:-1px">Ctrl</div>
<div class="a" style="left:869px;top:293px;color:#222;letter-spacing:-1px">Alt</div>
<div class="a" style="left:950px;top:293px;color:#222;letter-spacing:-0.5px">Shift</div>
<div class="a" style="left:349px;top:311px;width:36px;height:37px;background:#4f68c1;outline:1px dotted #cdb04a;outline-offset:-1px"></div>
<div class="hl" style="left:349px;top:348px;width:679px;height:1px"></div>
<div class="a" style="left:349px;top:315px;width:31.6px;text-align:right;color:#fff">1</div>
<div class="a" style="left:389.8px;top:315px;color:#111">Открыть быстрые товары</div>
<div class="a" style="left:649px;top:315px;color:#111">Быстрые товары <span class="l">(F2)</span></div>
<div class="a" style="left:788px;top:315px;color:#111">F2</div>
<div class="a" style="left:788px;top:333px;width:13px;height:13px;border:1px solid #b0a987;background:#fff"></div>
<div class="a" style="left:869px;top:333px;width:13px;height:13px;border:1px solid #b0a987;background:#fff"></div>
<div class="a" style="left:950px;top:333px;width:13px;height:13px;border:1px solid #b0a987;background:#fff"></div>
<div class="hl" style="left:349px;top:386px;width:679px;height:1px"></div>
<div class="a" style="left:349px;top:353px;width:31.6px;text-align:right;color:#111">2</div>
<div class="a" style="left:389.8px;top:353px;color:#111">Внести деньги</div>
<div class="a" style="left:649px;top:353px;color:#111">Внесение денег <span class="l">(F3)</span></div>
<div class="a" style="left:788px;top:353px;color:#111">F3</div>
<div class="a" style="left:788px;top:371px;width:13px;height:13px;border:1px solid #b0a987;background:#fff"></div>
<div class="a" style="left:869px;top:371px;width:13px;height:13px;border:1px solid #b0a987;background:#fff"></div>
<div class="a" style="left:950px;top:371px;width:13px;height:13px;border:1px solid #b0a987;background:#fff"></div>
<div class="hl" style="left:349px;top:424px;width:679px;height:1px"></div>
<div class="a" style="left:349px;top:391px;width:31.6px;text-align:right;color:#111">3</div>
<div class="a" style="left:389.8px;top:391px;color:#111">Изъять деньги</div>
<div class="a" style="left:649px;top:391px;color:#111">Изъятие денег <span class="l">(F4)</span></div>
<div class="a" style="left:788px;top:391px;color:#111">F4</div>
<div class="a" style="left:788px;top:409px;width:13px;height:13px;border:1px solid #b0a987;background:#fff"></div>
<div class="a" style="left:869px;top:409px;width:13px;height:13px;border:1px solid #b0a987;background:#fff"></div>
<div class="a" style="left:950px;top:409px;width:13px;height:13px;border:1px solid #b0a987;background:#fff"></div>
<div class="hl" style="left:349px;top:462px;width:679px;height:1px"></div>
<div class="a" style="left:349px;top:429px;width:31.6px;text-align:right;color:#111">4</div>
<div class="a" style="left:389.8px;top:429px;color:#111">Ввести ручную скидку</div>
<div class="a" style="left:649px;top:429px;color:#111">Уст. % на чек <span class="l">(F5)</span></div>
<div class="a" style="left:788px;top:429px;color:#111">F5</div>
<div class="a" style="left:788px;top:447px;width:13px;height:13px;border:1px solid #b0a987;background:#fff"></div>
<div class="a" style="left:869px;top:447px;width:13px;height:13px;border:1px solid #b0a987;background:#fff"></div>
<div class="a" style="left:950px;top:447px;width:13px;height:13px;border:1px solid #b0a987;background:#fff"></div>
<div class="hl" style="left:349px;top:500px;width:679px;height:1px"></div>
<div class="a" style="left:349px;top:467px;width:31.6px;text-align:right;color:#111">5</div>
<div class="a" style="left:389.8px;top:467px;color:#111">Отменить ручную скидку</div>
<div class="a" style="left:649px;top:467px;color:#111">Отмена % на чек <span class="l">(F6)</span></div>
<div class="a" style="left:788px;top:467px;color:#111">F6</div>
<div class="a" style="left:788px;top:485px;width:13px;height:13px;border:1px solid #b0a987;background:#fff"></div>
<div class="a" style="left:869px;top:485px;width:13px;height:13px;border:1px solid #b0a987;background:#fff"></div>
<div class="a" style="left:950px;top:485px;width:13px;height:13px;border:1px solid #b0a987;background:#fff"></div>
<div class="a" style="left:349px;top:505px;width:31.6px;text-align:right;color:#111">6</div>
<div class="a" style="left:389.8px;top:505px;color:#111">Ввести штрихкода</div>
<div class="a" style="left:649px;top:505px;color:#111">Штрихкод <span class="l">(F7)</span></div>
<div class="a" style="left:788px;top:505px;color:#111">F7</div>
<div class="a" style="left:788px;top:523px;width:13px;height:11px;border:1px solid #b0a987;background:#fff;border-bottom:none"></div>
<div class="a" style="left:869px;top:523px;width:13px;height:11px;border:1px solid #b0a987;background:#fff;border-bottom:none"></div>
<div class="a" style="left:950px;top:523px;width:13px;height:11px;border:1px solid #b0a987;background:#fff;border-bottom:none"></div>
<div class="a" style="left:1027px;top:269px;width:1px;height:265px;background:#ebe6da"></div>
<div class="a" style="left:1028px;top:269px;width:15px;height:265px;background:#fffdf6"></div>
<div class="a" style="left:1029px;top:270px;width:13px;height:18px;background:#ece6da;border:1px solid #f1e8bd"></div>
<svg class="a" style="left:1030.5px;top:275px" width="10" height="7" viewBox="0 0 10 7"><path d="M1 5.5L5 1.5L9 5.5" fill="none" stroke="#8a7c4e" stroke-width="1.3"/></svg>
<div class="a" style="left:1029px;top:289px;width:13px;height:41px;background:linear-gradient(90deg,#f2ede2,#e6dfd0);border:1px solid #f1e8bd"></div>
<div class="a" style="left:1029px;top:515px;width:13px;height:18px;background:#ece6da;border:1px solid #f1e8bd"></div>
<svg class="a" style="left:1030.5px;top:521px" width="10" height="7" viewBox="0 0 10 7"><path d="M1 1.5L5 5.5L9 1.5" fill="none" stroke="#a39c86" stroke-width="1.2"/></svg>
<!--/TABLE-->
<div class="a" id="maxk" style="left:348px;top:544px;font-size:11.05px">Максимальное количество кнопок в одном ряду:</div>
<div class="box" style="left:604px;top:541px;width:43px;height:19px"></div>
<div class="a" style="left:604px;top:544px;width:40px;text-align:right">11</div>
<!-- bottom bar -->
<div class="a" style="left:204px;top:586px;width:859px;height:25px;background:#ece6da;border-top:1px solid #b3ac86"></div>
<!--OKICONS-->
<svg class="a" style="left:870px;top:592px" width="12" height="14" viewBox="0 0 12 14"><path d="M.5.5h7.5l3.5 3.5v9.5H.5z" fill="url(#dg)" stroke="#8aa3c6"/><path d="M8 .5v3.5h3.5" fill="#e6eef9" stroke="#8aa3c6" stroke-width=".8"/><path d="M2.6 8.8l2.2 2.4 4.4-5" fill="none" stroke="#3f9a2a" stroke-width="2.2" stroke-linecap="round" stroke-linejoin="round"/></svg>
<svg class="a" style="left:916px;top:591px" width="15" height="15" viewBox="0 0 15 15"><path d="M.5 1.2a.7.7 0 0 1 .7-.7h12.6a.7.7 0 0 1 .7.7v12.6a.7.7 0 0 1-.7.7H1.2a.7.7 0 0 1-.7-.7z" fill="#6f9fd2" stroke="#4c7db6"/><rect x="2.6" y="1.2" width="9.8" height="5.6" fill="#e9f3fb" stroke="#a9c6e2" stroke-width=".6"/><path d="M3.4 3h8.2M3.4 4.8h8.2" stroke="#b5d3ea" stroke-width=".8"/><rect x="3" y="9" width="9" height="5" fill="#e3e9f0"/><rect x="4.2" y="10" width="2.6" height="3.4" fill="#4a5f7c"/></svg>
<svg class="a" style="left:997px;top:594px" width="11" height="11" viewBox="0 0 11 11"><path d="M2 1.8l6.6 6.8M8.6 1.8l-6.6 6.8" stroke="#3580c8" stroke-width="2.7" stroke-linecap="round"/></svg>
<!--/OKICONS-->
<div class="a" style="left:886px;top:593px;font-weight:bold;font-size:12px;color:#2a1c06">OK</div>
<div class="a" style="left:909px;top:589px;width:1px;height:19px;background:#cfc8b4"></div>
<div class="a" style="left:910px;top:589px;width:1px;height:19px;background:#fbf8f0"></div>
<div class="a" style="left:934px;top:593px">Записать</div>
<div class="a" style="left:988px;top:589px;width:1px;height:19px;background:#cfc8b4"></div>
<div class="a" style="left:989px;top:589px;width:1px;height:19px;background:#fbf8f0"></div>
<div class="a" style="left:1013px;top:593px">Закрыть</div>
<!-- arrow -->
<svg class="a" style="left:495px;top:510px" width="140" height="125" viewBox="495 510 140 125"><path d="M504 517L616 620.5" stroke="#fa0f14" stroke-width="3.3"/><path d="M625.5 629.5L609.2 624.8L620.5 614.2z" fill="#fa0f14"/></svg>

</body></html>
